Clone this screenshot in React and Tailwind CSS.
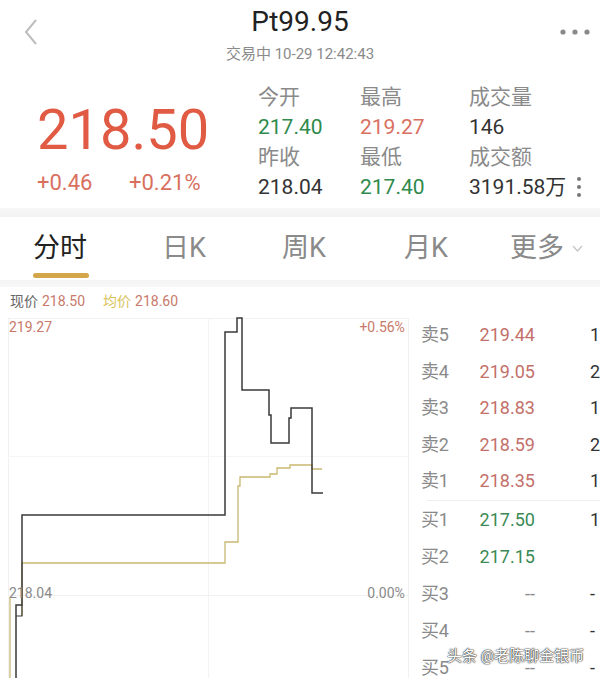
import React from 'react';

const SELLS = [
  ['卖5', '219.44', '1'],
  ['卖4', '219.05', '2'],
  ['卖3', '218.83', '1'],
  ['卖2', '218.59', '2'],
  ['卖1', '218.35', '1'],
];

const BUYS = [
  ['买1', '217.50', '1'],
  ['买2', '217.15', ''],
  ['买3', '--', '-'],
  ['买4', '--', '-'],
  ['买5', '--', '-'],
];

const TABS = [
  { label: '分时', w: 'w-[129px]' },
  { label: '日K', w: 'w-[120px]' },
  { label: '周K', w: 'w-[122px]' },
  { label: '月K', w: 'w-[106px]' },
];

const Stat = ({ label, value, color }) => (
  <div className="flex flex-col">
    <span className="text-[#8a8a8a]">{label}</span>
    <span className={color}>{value}</span>
  </div>
);

const BookRow = ({ row, priceColor, h }) => (
  <div className={`flex items-center ${h}`}>
    <span className="w-[57px] text-[#8a8a8a]">{row[0]}</span>
    <span className={`w-[57px] text-right ${row[1] === '--' ? 'text-[#8a8a8a]' : priceColor}`}>{row[1]}</span>
    <span className="pl-[55px] text-[#333]">{row[2]}</span>
  </div>
);

const Chart = () => (
  <svg className="absolute inset-0" width="412" height="363" viewBox="0 315 412 363" fill="none">
    <rect x="8.5" y="318.5" width="400" height="362" stroke="#f1f1f1" />
    <line x1="208.5" y1="318" x2="208.5" y2="678" stroke="#f3f3f3" />
    <line x1="8" y1="456.5" x2="408" y2="456.5" stroke="#f5f5f5" />
    <line x1="8" y1="595.5" x2="408" y2="595.5" stroke="#f1f1f1" />
    <path d="M10 678 V597" stroke="#c9b870" strokeWidth="1.3" />
    <path
      d="M22 616 V563 H225 V542 H238 V486 H240 V477 H270 V474 H277 V468 H290 V465 H312 V469 H322"
      stroke="#c9b870"
      strokeWidth="1.3"
    />
    <path
      d="M16 678 V605 H22 V515 H225 V332 H237 V318 H242 V390 H269 V415 H271 V443 H289 V418 H291 V408 H312 V493 H323"
      stroke="#3a3a3a"
      strokeWidth="1.5"
    />
    <path d="M22 605 V616 H16" stroke="#3a3a3a" strokeWidth="1.2" />
  </svg>
);

export default function App() {
  return (
    <div className="relative w-[600px] h-[678px] overflow-hidden bg-white font-['Roboto','Noto_Sans_CJK_SC',sans-serif]">
      {/* header */}
      <div className="grid grid-cols-[80px_1fr_80px] h-[70px]">
        <div className="pl-[23px] pt-[18px]">
          <svg width="16" height="28" viewBox="0 0 16 28">
            <polyline points="13,2 3,14 13,26" fill="none" stroke="#bdbdbd" strokeWidth="2" />
          </svg>
        </div>
        <div className="flex flex-col items-center pt-[5px]">
          <span className="text-[28px] leading-[34px] text-[#222]">Pt99.95</span>
          <span className="mt-[5px] text-[15px] leading-[20px] text-[#8a8a8a]">交易中 10-29 12:42:43</span>
        </div>
        <div className="flex justify-end pr-[8px] pt-[27px]">
          <svg width="34" height="10" viewBox="0 0 34 10">
            <circle cx="5" cy="5" r="2.6" fill="#8a8a8a" />
            <circle cx="17" cy="5" r="2.6" fill="#8a8a8a" />
            <circle cx="29" cy="5" r="2.6" fill="#8a8a8a" />
          </svg>
        </div>
      </div>

      {/* price block */}
      <div className="flex h-[138px]">
        <div className="w-[258px] pl-[37px] pt-[32px]">
          <div className="text-[56px] leading-[56px] text-[#e05a44]">218.50</div>
          <div className="mt-[12px] flex text-[22px] leading-[26px] text-[#d9705f]">
            <span className="w-[92px]">+0.46</span>
            <span>+0.21%</span>
          </div>
        </div>
        <div className="pt-[12px] text-[21px] leading-[30px]">
          <div className="grid grid-cols-[102px_109px_auto]">
            <Stat label="今开" value="217.40" color="text-[#2f8a4c]" />
            <Stat label="最高" value="219.27" color="text-[#d9705f]" />
            <Stat label="成交量" value="146" color="text-[#333]" />
            <Stat label="昨收" value="218.04" color="text-[#333]" />
            <Stat label="最低" value="217.40" color="text-[#2f8a4c]" />
            <div className="flex flex-col">
              <span className="text-[#8a8a8a]">成交额</span>
              <div className="flex items-center gap-[10px]">
                <span className="text-[#333]">3191.58万</span>
                <svg width="6" height="22" viewBox="0 0 6 22">
                  <circle cx="3" cy="3" r="2" fill="#777" />
                  <circle cx="3" cy="11" r="2" fill="#777" />
                  <circle cx="3" cy="19" r="2" fill="#777" />
                </svg>
              </div>
            </div>
          </div>
        </div>
      </div>

      <div className="h-[9px] bg-gradient-to-b from-[#f7f7f7] to-[#f2f2f2]" />

      {/* tabs */}
      <div className="flex h-[63px] pl-[33px] pt-[15px] text-[27px] leading-[32px]">
        {TABS.map((t, i) => (
          <div key={t.label} className={`${t.w} flex flex-col`}>
            <span className={i === 0 ? 'text-[#222]' : 'text-[#8a8a8a]'}>{t.label}</span>
            {i === 0 && <span className="mt-[9px] h-[5px] w-[56px] rounded-sm bg-[#d4a64a]" />}
          </div>
        ))}
        <div className="flex items-start gap-[8px] text-[#8a8a8a]">
          <span>更多</span>
          <svg className="mt-[13px]" width="11" height="7" viewBox="0 0 11 7">
            <polyline points="1,1 5.5,6 10,1" fill="none" stroke="#c4c4c4" strokeWidth="1.2" />
          </svg>
        </div>
      </div>

      <div className="h-[7px] bg-gradient-to-b from-[#f4f4f4] to-[#f8f8f8]" />

      {/* chart + order book */}
      <div className="flex h-[391px]">
        <div className="w-[412px]">
          <div className="flex h-[28px] items-center pl-[10px] text-[14px]">
            <span className="text-[#666]">现价</span>
            <span className="ml-[4px] text-[#c8796a]">218.50</span>
            <span className="ml-[18px] text-[#d9c25a]">均价</span>
            <span className="ml-[4px] text-[#c8796a]">218.60</span>
          </div>
          <div className="relative h-[363px]">
            <Chart />
            <div className="absolute left-[9px] right-[4px] top-[0px] flex justify-between text-[14px] leading-[24px] text-[#c8796a]">
              <span>219.27</span>
              <span>+0.56%</span>
            </div>
            <div className="absolute left-[9px] right-[4px] top-[266px] flex justify-between text-[14px] leading-[24px] text-[#8a8a8a]">
              <span>218.04</span>
              <span>0.00%</span>
            </div>
          </div>
        </div>

        <div className="flex-1 pl-[12px] pt-[30px] text-[18px] leading-[22px] whitespace-nowrap">
          {SELLS.map((r) => (
            <BookRow key={r[0]} row={r} priceColor="text-[#c4706a]" h="h-[36.5px]" />
          ))}
          <div className="ml-[6px] h-[1px] bg-[#eeeeee]" />
          <div className="pt-[1px]">
            {BUYS.map((r) => (
              <BookRow key={r[0]} row={r} priceColor="text-[#3b8a55]" h="h-[37px]" />
            ))}
          </div>
        </div>
      </div>

      <div className="absolute left-[447px] top-[646px] text-[15px] leading-[20px] text-white [text-shadow:0_0_1px_#333,0_0_1px_#333,0_0_2px_#555]">
        头条 @老陈聊金银币
      </div>
    </div>
  );
}
